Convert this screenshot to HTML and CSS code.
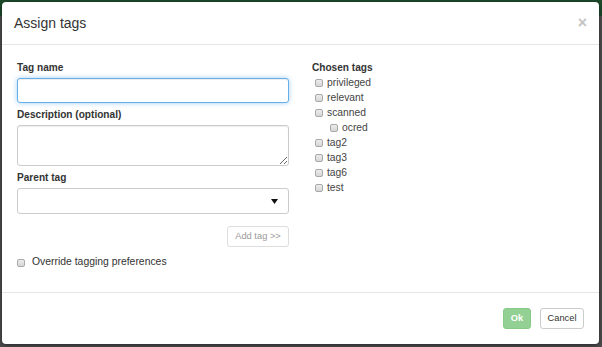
FILE: index.html
```html
<!DOCTYPE html>
<html>
<head>
<meta charset="utf-8">
<link rel="stylesheet" href="styles.css">
</head>
<body>
<div class="screen">
  <div class="modal">
    <div class="modal-header">
      <h4 class="modal-title">Assign tags</h4>
      <span class="close">×</span>
    </div>
    <div class="modal-body">
      <div class="col-left">
        <label class="field-label">Tag name</label>
        <input class="form-control focus" type="text">
        <label class="field-label">Description (optional)</label>
        <textarea class="form-control textarea"></textarea>
        <label class="field-label">Parent tag</label>
        <div class="form-control select">
          <svg class="caret" width="7" height="5" viewBox="0 0 7 5"><path d="M0 0H7L3.5 5Z" fill="#111"/></svg>
        </div>
        <div class="btn-row"><button class="btn btn-add">Add tag &gt;&gt;</button></div>
        <label class="check-row override"><input type="checkbox" class="cb"><span>Override tagging preferences</span></label>
      </div>
      <div class="col-right">
        <div class="field-label">Chosen tags</div>
        <ul class="tag-list">
          <li class="tag"><input type="checkbox" class="cb"><span>privileged</span></li>
          <li class="tag"><input type="checkbox" class="cb"><span>relevant</span></li>
          <li class="tag"><input type="checkbox" class="cb"><span>scanned</span></li>
          <li class="tag child"><input type="checkbox" class="cb"><span>ocred</span></li>
          <li class="tag"><input type="checkbox" class="cb"><span>tag2</span></li>
          <li class="tag"><input type="checkbox" class="cb"><span>tag3</span></li>
          <li class="tag"><input type="checkbox" class="cb"><span>tag6</span></li>
          <li class="tag"><input type="checkbox" class="cb"><span>test</span></li>
        </ul>
      </div>
    </div>
    <div class="modal-footer">
      <button class="btn btn-ok">Ok</button>
      <button class="btn btn-cancel">Cancel</button>
    </div>
  </div>
</div>
</body>
</html>
```
FILE: styles.css
```css
* { box-sizing: border-box; }
html, body { margin: 0; padding: 0; }
body {
  width: 602px;
  height: 347px;
  overflow: hidden;
  font-family: "Liberation Sans", Arial, sans-serif;
  color: #333;
  background: linear-gradient(#1d4a2b 0, #1d4a2b 16px, #4c4c4c 16px);
}
.screen {
  width: 602px;
  height: 347px;
  padding: 2px 3px 3px 2px;
}
.modal {
  height: 342px;
  display: flex;
  flex-direction: column;
  background: #fff;
  border-radius: 4px;
  box-shadow: 0 1px 4px rgba(0,0,0,.5);
}
.modal-header {
  display: flex;
  justify-content: space-between;
  align-items: flex-start;
  padding: 10.5px 12px 11.5px 12px;
  border-bottom: 1px solid #e5e5e5;
}
.modal-title {
  margin: 0;
  font-size: 14px;
  font-weight: normal;
  line-height: 20px;
  color: #333;
}
.close {
  font-size: 16px;
  font-weight: bold;
  line-height: 16px;
  color: #c4c4c4;
  margin-top: 2px;
}
.modal-body {
  flex: 1;
  display: grid;
  grid-template-columns: 272px 1fr;
  column-gap: 23px;
  padding: 15px 15px 0 15px;
  align-items: start;
}
.col-left, .col-right {
  display: flex;
  flex-direction: column;
}
.field-label {
  display: block;
  font-size: 10.1px;
  font-weight: bold;
  line-height: 15px;
  margin-bottom: 3px;
  color: #333;
}
.col-right .field-label { margin-bottom: 0; }
.form-control {
  display: block;
  width: 272px;
  height: 25px;
  margin: 0 0 4px 0;
  border: 1px solid #ccc;
  border-radius: 3px;
  background: #fff;
  font-family: inherit;
  box-shadow: inset 0 1px 1px rgba(0,0,0,.075);
}
.form-control.focus {
  border-color: #66afe9;
  box-shadow: inset 0 1px 1px rgba(0,0,0,.075), 0 0 5px rgba(102,175,233,.6);
  outline: none;
}
.textarea {
  height: 41px;
  resize: both;
}
.select {
  height: 26px;
  margin-bottom: 12px;
  display: flex;
  align-items: center;
  justify-content: flex-end;
  padding-right: 10px;
  box-shadow: none;
}
.btn-row {
  display: flex;
  justify-content: flex-end;
  margin-bottom: 7px;
}
.btn {
  font-family: "Liberation Sans", Arial, sans-serif;
  font-size: 9.3px;
  height: 21px;
  line-height: 19px;
  border: 1px solid #ccc;
  border-radius: 3px;
  background: #fff;
  color: #333;
  margin: 0;
}
.btn-add {
  width: 62px;
  padding: 0;
  color: #9a9a9a;
  border-color: #ddd;
}
.check-row {
  display: flex;
  align-items: center;
  font-size: 10.4px;
  line-height: 15px;
  color: #333;
}
.override .cb { margin-right: 7px; margin-top: 3px; }
.cb {
  -webkit-appearance: none;
  appearance: none;
  width: 8px;
  height: 8px;
  margin: 0;
  border: 1px solid #a8a8a8;
  border-radius: 2px;
  background: linear-gradient(#ececec, #d6d6d6);
  flex: none;
}
.tag-list {
  list-style: none;
  margin: 0;
  padding: 0;
}
.tag {
  display: flex;
  align-items: center;
  font-size: 10.3px;
  line-height: 15px;
  color: #444;
  padding-left: 3px;
}
.tag .cb { margin-right: 4px; margin-top: 1px; }
.tag.child { padding-left: 18px; }
.modal-footer {
  display: flex;
  justify-content: flex-end;
  gap: 9px;
  padding: 15px 15px 15px 15px;
  border-top: 1px solid #e5e5e5;
}
.btn-ok {
  width: 28px;
  padding: 0;
  background: #93d093;
  border-color: #88c988;
  color: #fff;
  font-weight: bold;
}
.btn-cancel {
  width: 44px;
  padding: 0;
}
```
